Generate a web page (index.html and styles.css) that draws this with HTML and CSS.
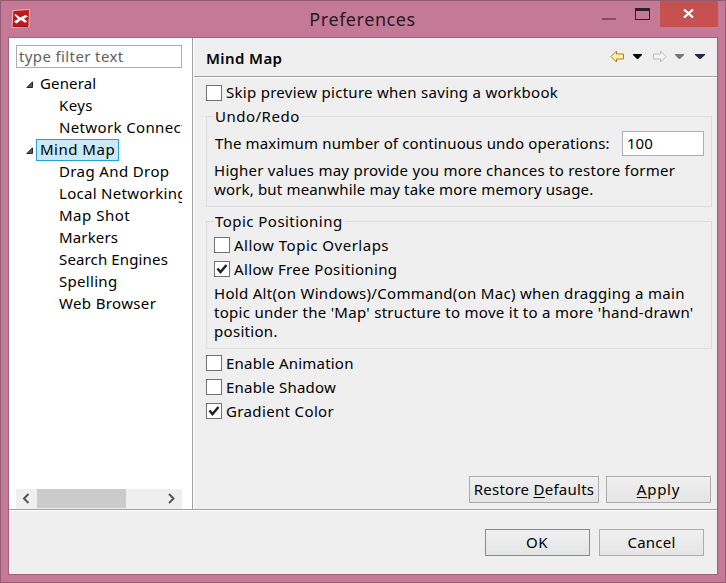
FILE: index.html
```html
<!DOCTYPE html>
<html lang="en">
<head>
<meta charset="utf-8">
<title>Preferences</title>
<link rel="stylesheet" href="styles.css">
</head>
<body>
<div class="window">
  <header class="titlebar">
    <svg class="logo" width="20" height="20" viewBox="0 0 20 20">
      <path d="M2 1.500L18.500 .5 18 17.500 1 18.500z" fill="#bd181b" stroke="#e3bdb5"/>
      <path d="M2.500 17.500h14.500" stroke="#8e1719"/>
      <path d="M4.500 5l4.500 3.500 5.500-2.500 2.500 1.500-4 2 3.500 3.500-3 .5-3.500-2.500-4.500 3.500-2.500-2 4-2.500-3.500-4z" fill="#fff"/>
    </svg>
    <h1 class="title">Preferences</h1>
    <svg class="window-controls" width="58" height="26" viewBox="0 0 58 26" shape-rendering="crispEdges">
      <path d="M0 17h14v2H0z" fill="#7d5263"/>
      <path d="M33 7h15v12H33zM34 10v8h13v-8z" fill="#2a2025" fill-rule="evenodd"/>
    </svg>
    <div class="close">
      <svg width="58" height="26" viewBox="0 0 58 26"><path d="M24 8.500l9 8M33 8.500l-9 8" stroke="#fff" stroke-width="2.300"/></svg>
    </div>
  </header>
  <main class="client">
    <div class="upper">
      <aside class="sidebar">
        <div class="filter"><span class="t-filter">type filter text</span></div>
        <ul class="tree">
          <li class="node parent"><svg class="arrow" width="8" height="8"><path d="M6.500 .8V6.500H.8z" fill="#595959" stroke="#262626"/></svg><span class="name t-general">General</span></li>
          <li class="node"><span class="t-keys">Keys</span></li>
          <li class="node"><span class="t-network">Network Connections</span></li>
          <li class="node parent"><svg class="arrow" width="8" height="8"><path d="M6.500 .8V6.500H.8z" fill="#595959" stroke="#262626"/></svg><span class="name selected t-mind">Mind Map</span></li>
          <li class="node"><span class="t-drag">Drag And Drop</span></li>
          <li class="node"><span class="t-local">Local Networking</span></li>
          <li class="node"><span class="t-shot">Map Shot</span></li>
          <li class="node"><span class="t-markers">Markers</span></li>
          <li class="node"><span class="t-search">Search Engines</span></li>
          <li class="node"><span class="t-spelling">Spelling</span></li>
          <li class="node"><span class="t-web">Web Browser</span></li>
        </ul>
        <div class="scrollbar">
          <svg width="21" height="20"><path d="M12.500 5L8 9.500l4.500 4.500" fill="none" stroke="#555" stroke-width="2"/></svg>
          <div class="thumb"></div>
          <svg width="21" height="20"><path d="M8 5l4.500 4.500L8 14" fill="none" stroke="#555" stroke-width="2"/></svg>
        </div>
      </aside>
      <section class="page">
        <div class="page-head">
          <h2 class="heading">Mind Map</h2>
          <svg class="nav" width="100" height="14" viewBox="0 0 100 14">
            <path d="M1 6.500l5.500-5.500v3H13.500v5H6.500v3z" fill="#fff0b5" stroke="#b77b13"/>
            <path d="M23 4h9v1l-4 4h-1l-4-4z" fill="#000"/>
            <path d="M56 6.500L50.500 1v3H43.500v5h7v3z" fill="#f4f4f2" stroke="#bcbcbc"/>
            <path d="M65 4h9v1l-4 4h-1l-4-4z" fill="#777"/>
            <path d="M85 4h10v1l-4.500 4h-1L85 5z" fill="#292449"/>
          </svg>
        </div>
        <div class="page-body">
          <label class="check first"><span class="box"></span><span class="t-skip">Skip preview picture when saving a workbook</span></label>
          <section class="group undo">
            <h3 class="legend"><span class="t-undo">Undo/Redo</span></h3>
            <div class="field"><span class="t-max">The maximum number of continuous undo operations:</span><div class="number"><span class="t-num">100</span></div></div>
            <p class="note"><span class="t-high">Higher values may provide you more chances to restore former</span><br><span class="t-work">work, but meanwhile may take more memory usage.</span></p>
          </section>
          <section class="group positioning">
            <h3 class="legend"><span class="t-topic">Topic Positioning</span></h3>
            <label class="check"><span class="box"></span><span class="t-overlaps">Allow Topic Overlaps</span></label>
            <label class="check"><span class="box"><svg width="14" height="14"><path d="M2.500 6.500l3 3.500 6-7" fill="none" stroke="#222" stroke-width="2.500"/></svg></span><span class="t-free">Allow Free Positioning</span></label>
            <p class="note"><span class="t-hold">Hold Alt(on Windows)/Command(on Mac) when dragging a main</span><br><span class="t-under">topic under the 'Map' structure to move it to a more 'hand-drawn'</span><br><span class="t-pos">position.</span></p>
          </section>
          <label class="check"><span class="box"></span><span class="t-anim">Enable Animation</span></label>
          <label class="check"><span class="box"></span><span class="t-shadow">Enable Shadow</span></label>
          <label class="check"><span class="box"><svg width="14" height="14"><path d="M2.500 6.500l3 3.500 6-7" fill="none" stroke="#222" stroke-width="2.500"/></svg></span><span class="t-grad">Gradient Color</span></label>
          <div class="page-actions">
            <div class="button wide"><span class="t-restore">Restore <u>D</u>efaults</span></div>
            <div class="button"><span class="t-apply"><u>A</u>pply</span></div>
          </div>
        </div>
      </section>
    </div>
    <footer class="footer">
      <div class="button default"><span class="t-ok">OK</span></div>
      <div class="button"><span class="t-cancel">Cancel</span></div>
    </footer>
  </main>
</div>
</body>
</html>
```
FILE: styles.css
```css
* { box-sizing: border-box; }
body { margin: 0; overflow: hidden; color: #000; font: 15px/19px "Noto Sans", "Open Sans", sans-serif; }
h1, h2, h3, p, ul { margin: 0; padding: 0; font: inherit; }
svg { display: block; flex: none; }
span { white-space: nowrap; }

.window { width: 726px; height: 583px; padding: 0 7px 7px; border: 1px solid #935b72; background: #c47997; }
.titlebar { display: flex; height: 36px; }
.logo { margin: 8px 0 0 3px; }
.title { width: 571px; padding: 5px 0 0 92px; text-align: center; font-size: 18px; line-height: 26px; letter-spacing: .55px; color: #29191f; }
.close { flex: none; width: 58px; height: 26px; background: #c75050; }

.client { display: flex; flex-direction: column; width: 710px; height: 538px; border: 1px solid #a26079; background: #efefef; }
.upper { display: flex; height: 471px; }
.sidebar { width: 184px; padding: 7px 0 0 7px; border-right: 1px solid #a0a0a0; background: #fff; }
.filter { width: 166px; height: 23px; padding: 1px 2px; border: 1px solid #abadb3; color: #606060; }
.tree { width: 166px; height: 421px; padding-top: 5px; overflow: hidden; list-style: none; }
.node { height: 22px; padding: 1px 0 0 43px; }
.parent { display: flex; padding: 0 0 0 10px; }
.arrow { margin-top: 8px; }
.name { height: 22px; margin-left: 2px; padding: 0 3px; border: 1px solid transparent; }
.selected { width: 83px; border-color: #26a0da; background: #cbe8f6; }
.scrollbar { display: flex; width: 166px; height: 20px; background: #efefef; }
.thumb { width: 89px; height: 19px; margin-right: 35px; background: #cbcbcb; }

.page { flex: 1; border-left: 1px solid #fff; }
.page-head { display: flex; justify-content: space-between; height: 39px; padding: 11px 7px 0 12px; border-bottom: 1px solid #a0a0a0; }
.heading { font-weight: 600; letter-spacing: .4px; }
.nav { margin-top: 1px; }
.page-body { height: 432px; padding: 7px 0 0 12px; border-top: 1px solid #fff; }
.check { display: flex; gap: 4px; height: 24px; }
.check > span:last-child { margin-top: -1px; }
.check.first > span:last-child { margin-top: -2px; }
.box { flex: none; width: 16px; height: 16px; border: 1px solid #707070; background: #fff; }
.group { width: 506px; padding: 0 7px; border: 1px solid #dcdcdc; }
.undo { height: 91px; margin-top: 7px; }
.positioning { height: 128px; margin: 14px 0 6px; }
.legend { width: max-content; height: 16px; margin-top: -10px; padding: 0 2px 0 1px; background: #efefef; }
.field { display: flex; justify-content: space-between; align-items: center; height: 25px; margin-top: 8px; padding-left: 1px; }
.number { width: 82px; height: 25px; padding: 2px 4px; border: 1px solid #abadb3; background: #fff; }
.note { margin: 5px 0 0; }
.positioning .legend { margin-bottom: 9px; }
.positioning .note { margin-top: -1px; }
.page-actions { display: flex; gap: 7px; margin-top: 49px; padding-left: 263px; }
.button { display: flex; justify-content: center; width: 105px; height: 27px; padding-top: 3px; border: 1px solid #acacac; background: linear-gradient(#f0f0f0, #e5e5e5); }
.wide { width: 130px; }
.default { border-color: #3c9df2; }
u { text-underline-offset: 2px; text-decoration-thickness: 1px; }
.footer { display: flex; justify-content: flex-end; gap: 9px; height: 65px; padding: 19px 13px 0 0; border-top: 1px solid #a0a0a0; box-shadow: inset 0 1px #fff; }

/* letter fitting */
.t-filter, .t-drag, .t-keys { letter-spacing: .38px; }
.t-general, .t-markers, .t-search { letter-spacing: .14px; }
.t-network, .t-web, .t-free, .t-grad { letter-spacing: .36px; }
.t-mind, .t-shot, .t-overlaps, .t-undo { letter-spacing: .5px; }
.t-local, .t-spelling, .t-hold, .t-pos { letter-spacing: .3px; }
.t-skip { letter-spacing: .28px; }
.t-under { letter-spacing: .29px; }
.t-high { letter-spacing: .26px; }
.t-max { letter-spacing: .15px; }
.t-work { letter-spacing: .165px; }
.t-topic { letter-spacing: .46px; }
.t-anim, .t-shadow, .t-cancel { letter-spacing: .21px; }
.t-restore { letter-spacing: .26px; }
.t-apply { letter-spacing: .75px; }
.t-ok { letter-spacing: .5px; margin-right: 1px; }
```
